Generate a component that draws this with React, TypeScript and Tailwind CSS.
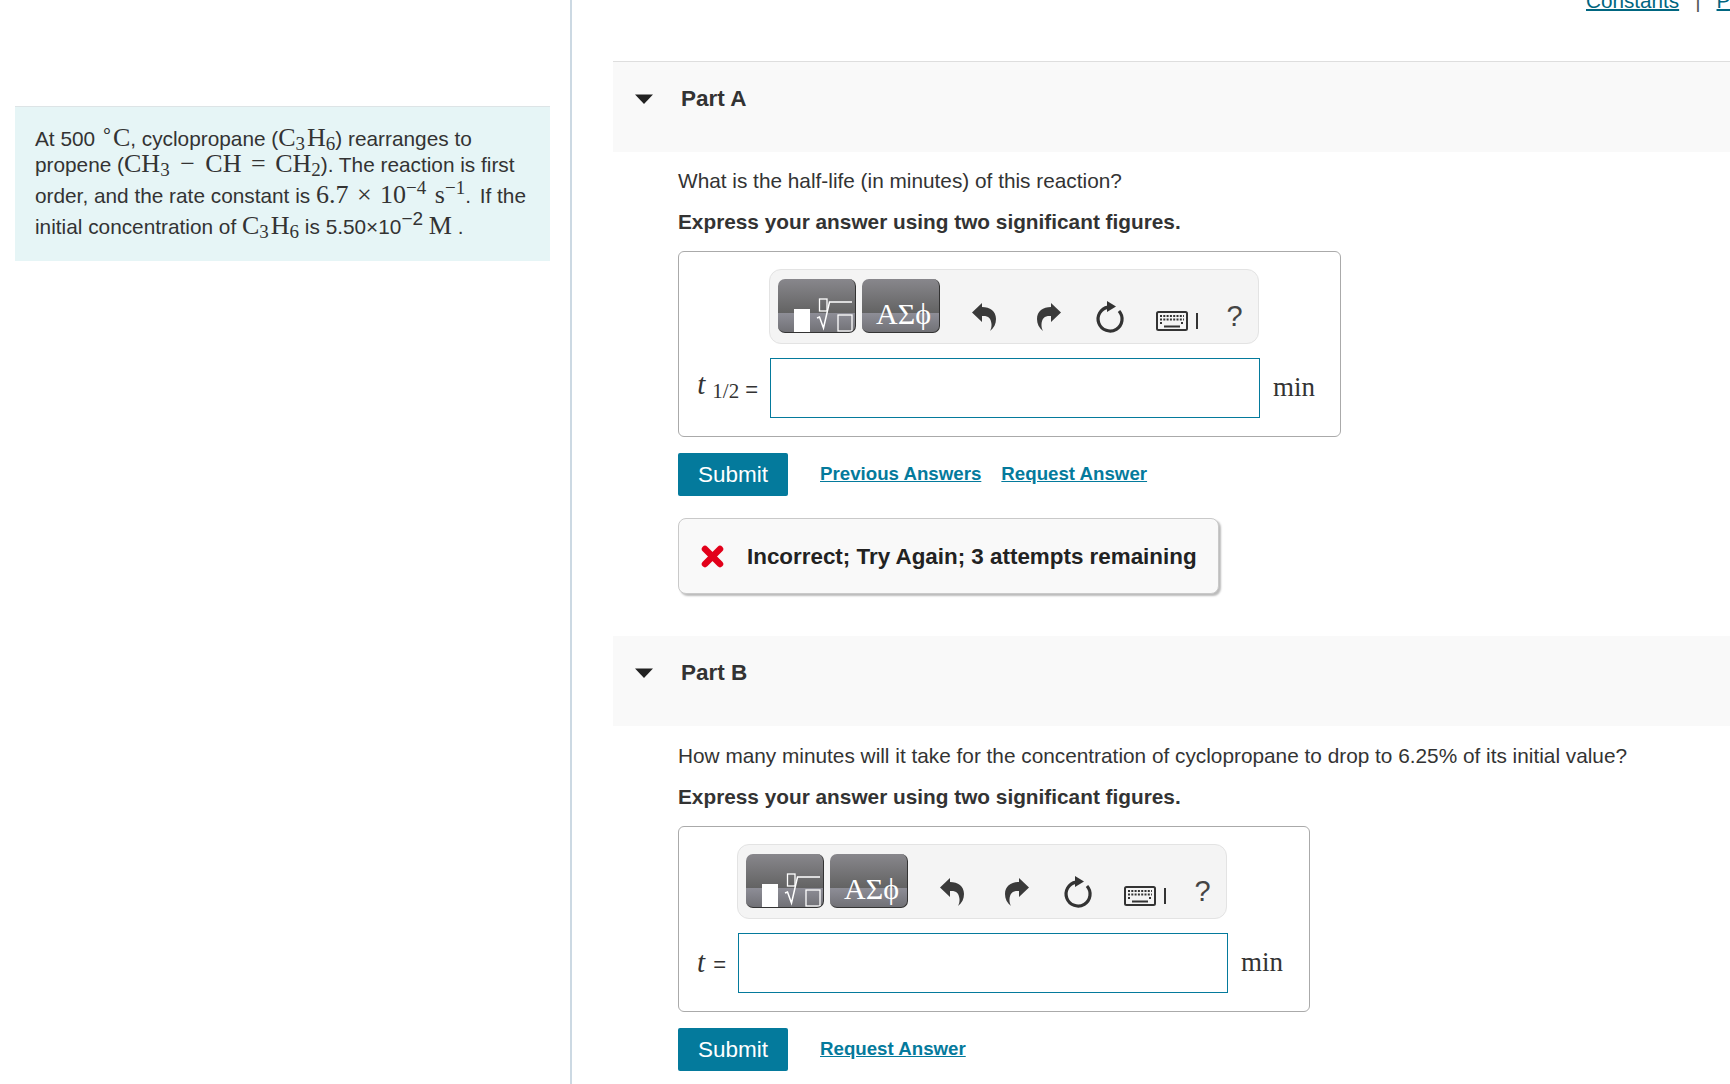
const sans = { fontFamily: '"Liberation Sans", Arial, sans-serif' }

function M({ children, className = "" }: { children: React.ReactNode; className?: string }) {
  return <span className={`font-['Liberation_Serif',serif] text-[26px] ${className}`}>{children}</span>
}

function Sub({ children }: { children: React.ReactNode }) {
  return <span className="relative top-[4px] text-[19px] leading-none">{children}</span>
}

function Sup({ children }: { children: React.ReactNode }) {
  return <span className="relative -top-[9px] text-[19px] leading-none">{children}</span>
}

function PartHeader({ title }: { title: string }) {
  return (
    <div className="h-[90px] bg-[#f9f9f9] flex items-center pl-[22px] pb-[16px]">
      <svg width="18" height="10" viewBox="0 0 18 10" className="mr-[28px]">
        <path d="M0 0.5h18L9 10z" fill="#222" />
      </svg>
      <span className="text-[22.500px] font-bold text-[#333]">{title}</span>
    </div>
  )
}

function FormatButtons() {
  return (
    <div className="flex gap-[6px]">
      <div className="relative w-[78px] h-[54px] rounded-[7px] border-b border-r border-[#333] overflow-hidden bg-[linear-gradient(#88878c_0%,#636363_64%,#8d8d96_65%,#717176_100%)]">
        <svg width="78" height="54" viewBox="0 0 78 54" className="absolute inset-0">
          <rect x="16" y="30" width="16" height="24" fill="#fff" />
          <rect x="41.500" y="20" width="7.500" height="12" fill="none" stroke="#fff" strokeWidth="1.300" />
          <path d="M39 39l2.500-1 4 11 6-26h22.500" fill="none" stroke="#fff" strokeWidth="1.500" />
          <rect x="60" y="36" width="14" height="16" fill="none" stroke="#fff" strokeWidth="1.300" />
        </svg>
      </div>
      <div className="w-[78px] h-[54px] rounded-[7px] border-b border-r border-[#333] flex items-end justify-center pl-[6px] bg-[linear-gradient(#88878c_0%,#636363_64%,#8d8d96_65%,#717176_100%)]">
        <span className="font-['Liberation_Serif',serif] text-[30px] leading-[36px] text-white">ΑΣϕ</span>
      </div>
    </div>
  )
}

function Toolbar() {
  return (
    <div className="-ml-[1px] w-[490px] h-[75px] rounded-[12px] border border-[#e3e3e3] bg-[#f4f4f4] flex items-start pl-[8px] pt-[9px]">
      <FormatButtons />
      <div className="flex items-center h-[54px] pt-[20px]">
        <svg width="26" height="32" viewBox="0 0 26 32" className="ml-[31px]">
          <path d="M11 3L1 12.500 11 22v-6c6-.5 9 2 9.500 8 .2 3-.5 5-1.500 7 4-3 6-7 6-12 0-8-6-12-14-12z" fill="#3a3a3a" />
        </svg>
        <svg width="26" height="32" viewBox="0 0 26 32" className="ml-[39px]">
          <path d="M15 3l10 9.500L15 22v-6c-6-.5-9 2-9.500 8-.2 3 .5 5 1.500 7-4-3-6-7-6-12 0-8 6-12 14-12z" fill="#3a3a3a" />
        </svg>
        <svg width="30" height="36" viewBox="0 0 30 36" className="ml-[33px]">
          <path d="M13 9.200A12 12 0 1 0 24 13" fill="none" stroke="#333" strokeWidth="3.200" />
          <path d="M12 3l9 5.500-9 5.500z" fill="#333" />
        </svg>
        <svg width="32" height="20" viewBox="0 0 32 20" className="ml-[31px] mt-[9px]">
          <rect x="1" y="1" width="30" height="18" rx="1.500" fill="#f4f4f4" stroke="#333" strokeWidth="2" />
          <path d="M4 5h24M4 8.500h24M4 12h3M25 12h3" stroke="#333" strokeWidth="1.800" strokeDasharray="2 1.300" fill="none" />
          <path d="M8 15.500h16" stroke="#333" strokeWidth="2" />
        </svg>
        <span className="ml-[8px] mt-[9px] w-[1.500px] h-[16px] bg-[#333]" />
        <span className="ml-[29px] text-[29px] leading-none text-[#444]">?</span>
      </div>
    </div>
  )
}

function AnswerBox({ label, width, inputLeft }: { label: React.ReactNode; width: string; inputLeft: string }) {
  return (
    <div className={`${width} h-[186px] border border-[#aaaaaa] rounded-[6px] pt-[17px] ${inputLeft}`}>
      <Toolbar />
      <div className="relative mt-[14px] w-[490px] h-[60px] border border-[#047a9c] bg-white">
        <div className="absolute right-full top-0 h-[60px] whitespace-nowrap flex items-center pr-[13px] text-[#333]">
          {label}
        </div>
        <span className="absolute left-full ml-[14px] top-[13px] font-['Liberation_Serif',serif] text-[27px] leading-[30px] text-[#333]">
          min
        </span>
      </div>
    </div>
  )
}

function SubmitButton() {
  return (
    <button className="w-[110px] h-[43px] rounded-[2px] bg-[#047a9c] text-white text-[22.500px] shrink-0">Submit</button>
  )
}

function ActionLink({ children }: { children: React.ReactNode }) {
  return <a className="text-[18.700px] font-bold text-[#047a9c] underline">{children}</a>
}

export default function App() {
  return (
    <div style={sans} className="w-[1730px] h-[1084px] overflow-hidden bg-white flex text-[#333]">
      <div className="w-[572px] shrink-0 border-r-2 border-[#ccd9e3] pt-[106px] pl-[15px] pr-[20px]">
        <div className="h-[155px] bg-[#e6f5f6] border-t border-[#dde4e6] pl-[20px] pt-[18px] text-[20.800px] text-[#333] whitespace-nowrap">
          <div className="h-[26px] leading-[26px]">
            At 500 <Sup>∘</Sup><M>C</M>, cyclopropane (<M>C<Sub>3</Sub><span className="ml-[2px]">H</span><Sub>6</Sub></M>) rearranges to
          </div>
          <div className="h-[28px] leading-[26px]">
            propene (<M>CH<Sub>3</Sub><span className="mx-[4px]"> − </span>CH<span className="mx-[3px]"> = </span>CH<Sub>2</Sub></M>). The reaction is first
          </div>
          <div className="h-[31px] leading-[32px]">
            order, and the rate constant is <M>6.7<span className="mx-[2px]"> × </span>10<Sup>−4</Sup><span className="ml-[2px]"> s</span><Sup>−1</Sup></M>.<span className="ml-[3px]"> If the</span>
          </div>
          <div className="h-[30px] leading-[32px]">
            initial concentration of <M>C<Sub>3</Sub><span className="ml-[2px]">H</span><Sub>6</Sub></M> is 5.50×10<Sup>−2</Sup> <M>M</M> .
          </div>
        </div>
      </div>

      <div className="flex-1 min-w-0 ml-[41px]">
        <div className="h-[62px] overflow-hidden whitespace-nowrap pl-[973px] text-[20.700px] leading-none border-b border-[#dedede]">
          <div className="-mt-[9px] flex items-center">
            <a className="text-[#006680] underline decoration-[2px]">Constants</a>
            <span className="mx-[16px] text-[#555]">|</span>
            <a className="text-[#006680] underline decoration-[2px]">Periodic Table</a>
          </div>
        </div>

        <div>
          <PartHeader title="Part A" />
          <div className="pl-[65px]">
            <p className="mt-[15px] text-[20.800px] leading-[28px]">What is the half-life (in minutes) of this reaction?</p>
            <p className="mt-[13px] text-[20.800px] leading-[28px] font-bold">Express your answer using two significant figures.</p>
            <div className="mt-[15px]">
              <AnswerBox
                width="w-[663px]"
                inputLeft="pl-[91px]"
                label={
                  <>
                    <span className="font-['Liberation_Serif',serif] italic text-[29px] -mt-[9px]">t</span>
                    <span className="font-['Liberation_Serif',serif] text-[21px] ml-[7px] mt-[6px]">1/2</span>
                    <span className="text-[22px] ml-[6px]">=</span>
                  </>
                }
              />
            </div>
            <div className="mt-[16px] flex items-center">
              <SubmitButton />
              <div className="ml-[32px] flex gap-[20px]">
                <ActionLink>Previous Answers</ActionLink>
                <ActionLink>Request Answer</ActionLink>
              </div>
            </div>
            <div className="mt-[22px] w-[541px] h-[76px] rounded-[8px] border border-[#c9c9c9] bg-[#f9f9f9] shadow-[2px_2px_2px_#bbbbbb] flex items-center pl-[22px]">
              <svg width="23" height="23" viewBox="0 0 23 23" className="shrink-0">
                <path d="M4 4l15 15M19 4L4 19" stroke="#e2001a" strokeWidth="6.500" strokeLinecap="round" />
              </svg>
              <span className="ml-[23px] pt-[2px] text-[22.400px] font-bold text-[#222] whitespace-nowrap">
                Incorrect; Try Again; 3 attempts remaining
              </span>
            </div>
          </div>

          <div className="mt-[42px]">
            <PartHeader title="Part B" />
          </div>
          <div className="pl-[65px]">
            <p className="mt-[16px] text-[20.800px] leading-[28px] whitespace-nowrap">
              How many minutes will it take for the concentration of cyclopropane to drop to 6.25% of its initial value?
            </p>
            <p className="mt-[13px] text-[20.800px] leading-[28px] font-bold">Express your answer using two significant figures.</p>
            <div className="mt-[15px]">
              <AnswerBox
                width="w-[632px]"
                inputLeft="pl-[59px]"
                label={
                  <>
                    <span className="font-['Liberation_Serif',serif] italic text-[29px] -mt-[2px]">t</span>
                    <span className="text-[22px] ml-[8px]">=</span>
                  </>
                }
              />
            </div>
            <div className="mt-[16px] flex items-center">
              <SubmitButton />
              <div className="ml-[32px]">
                <ActionLink>Request Answer</ActionLink>
              </div>
            </div>
          </div>
        </div>
      </div>
    </div>
  )
}
